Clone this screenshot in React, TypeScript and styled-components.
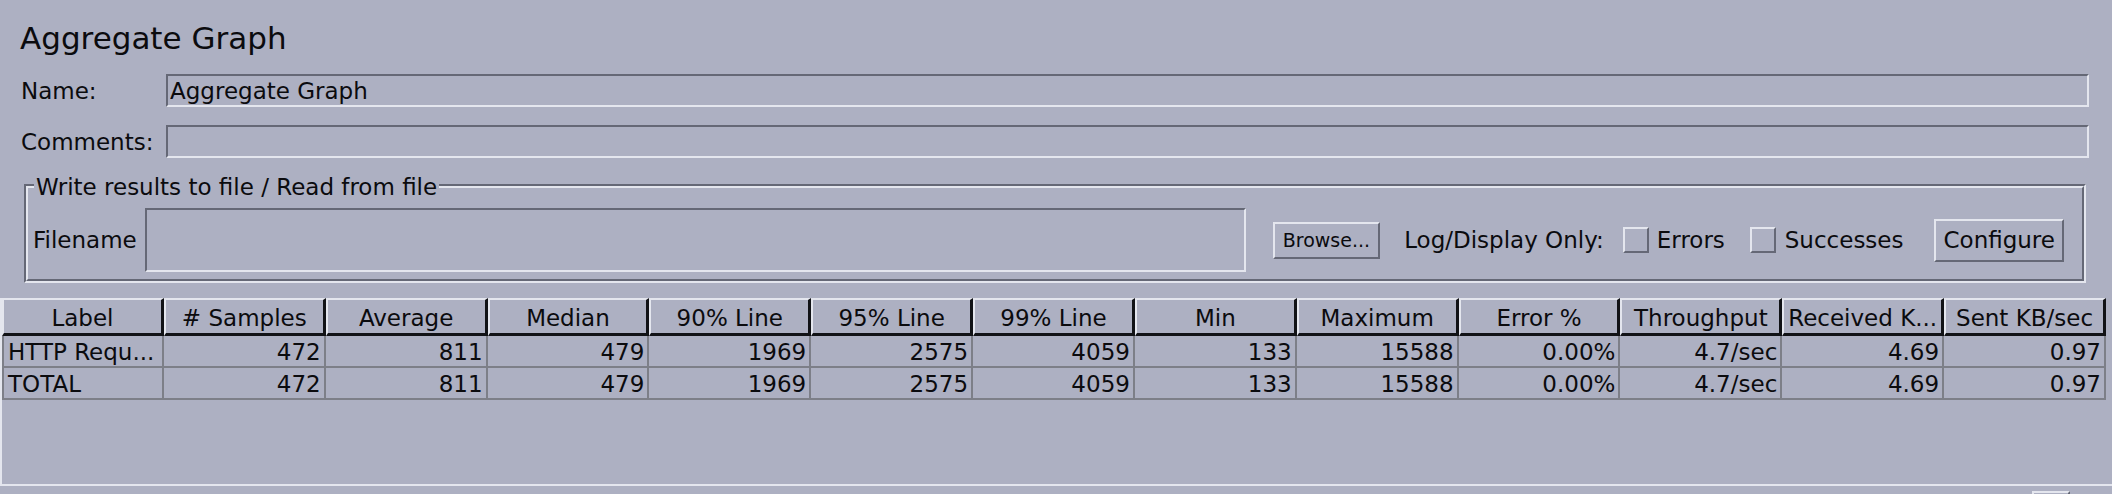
import React from "react";
import styled, { createGlobalStyle } from "styled-components";

const BG = "#adb0c2";
const DARK = "#656876";
const LIGHT = "#e4e6ee";
const INK = "#0b0b0e";
const GRID = "#7d7f88";
const FONT = `"DejaVu Sans", "Liberation Sans", sans-serif`;

const Global = createGlobalStyle`
  html, body { margin: 0; padding: 0; background: ${BG}; }
  body {
    width: 2112px; height: 494px; overflow: hidden;
    font-family: ${FONT}; color: ${INK};
  }
  * { box-sizing: border-box; }
`;

const Page = styled.div`
  display: flex;
  flex-direction: column;
  width: 2112px;
  height: 494px;
  overflow: hidden;
  & > * { flex-shrink: 0; }
`;

const Top = styled.div`
  display: flex;
  flex-direction: column;
  padding: 0 23px 0 20px;
`;

const Title = styled.h1`
  margin: 20px 0 0;
  font-size: 31px;
  line-height: 36px;
  font-weight: normal;
`;

const FormRow = styled.div<{ $mt: number }>`
  display: flex;
  align-items: center;
  margin-top: ${(p) => p.$mt}px;
`;

const RowLabel = styled.label`
  width: 146px;
  padding-left: 1px;
  font-size: 23px;
  line-height: 28px;
`;

const TextField = styled.input<{ $h: number }>`
  flex: 1;
  min-width: 0;
  height: ${(p) => p.$h}px;
  margin: 0;
  padding: 0 2px;
  font: 23px ${FONT};
  color: ${INK};
  background: transparent;
  border-style: solid;
  border-width: 2px;
  border-color: ${DARK} ${LIGHT} ${LIGHT} ${DARK};
  outline: none;
`;

const Group = styled.div`
  position: relative;
  margin: 26px 26px 0 24px;
  border: 2px solid;
  border-color: ${DARK} ${LIGHT} ${LIGHT} ${DARK};
`;

const GroupInner = styled.div`
  display: flex;
  align-items: center;
  padding: 20px 18px 7px 3px;
  border: 2px solid;
  border-color: ${LIGHT} ${DARK} ${DARK} ${LIGHT};
`;

const Legend = styled.span`
  position: absolute;
  top: -11px;
  left: 8px;
  padding: 0 2px;
  background: ${BG};
  font-size: 23px;
  line-height: 24px;
`;

const FileLabel = styled.label`
  width: 114px;
  padding-left: 2px;
  font-size: 23px;
  line-height: 28px;
`;

const FileField = styled(TextField)`
  flex: 0 0 1101px;
`;

const Button = styled.button<{ $ml: number; $w: number; $h: number; $fs: number }>`
  margin: 0 0 0 ${(p) => p.$ml}px;
  width: ${(p) => p.$w}px;
  height: ${(p) => p.$h}px;
  padding: 0;
  font: ${(p) => p.$fs}px ${FONT};
  color: ${INK};
  background: ${BG};
  border-style: solid;
  border-width: 2px;
  border-color: ${LIGHT} ${DARK} ${DARK} ${LIGHT};
`;

const Text = styled.span<{ $ml: number }>`
  margin-left: ${(p) => p.$ml}px;
  font-size: 23px;
  line-height: 28px;
  white-space: nowrap;
`;

const Check = styled.input.attrs({ type: "checkbox" })<{ $ml: number }>`
  appearance: none;
  -webkit-appearance: none;
  margin: 0 0 0 ${(p) => p.$ml}px;
  width: 26px;
  height: 26px;
  background: ${BG};
  border-style: solid;
  border-width: 2px;
  border-color: ${LIGHT} ${DARK} ${DARK} ${LIGHT};
`;

const ScrollPane = styled.div`
  margin-top: 15px;
  height: 188px;
  border-left: 2px solid ${LIGHT};
  border-bottom: 2px solid ${LIGHT};
`;

const Table = styled.table`
  width: 2104px;
  table-layout: fixed;
  border-collapse: separate;
  border-spacing: 0;
  font-size: 23px;
`;

const Th = styled.th`
  height: 38px;
  padding: 2px 2px 0;
  font-weight: normal;
  text-align: center;
  white-space: nowrap;
  overflow: hidden;
  border-style: solid;
  border-width: 2px 3px 3px 2px;
  border-color: ${LIGHT} #111216 #111216 ${LIGHT};
`;

const Td = styled.td<{ $left?: boolean }>`
  height: 32px;
  padding: 1px 3px 0 4px;
  text-align: ${(p) => (p.$left ? "left" : "right")};
  white-space: nowrap;
  overflow: hidden;
  border-right: 2px solid ${GRID};
  border-bottom: 2px solid ${GRID};
  border-left: ${(p) => (p.$left ? `2px solid ${GRID}` : "none")};
`;

const Footer = styled.div`
  display: flex;
  justify-content: flex-end;
  padding: 5px 42px 0 0;
  height: 20px;
`;

const Stub = styled.div`
  width: 38px;
  height: 12px;
  border-style: solid;
  border-width: 2px 2px 0 2px;
  border-color: ${LIGHT} ${DARK} ${DARK} ${LIGHT};
`;

const headers = [
  "Label",
  "# Samples",
  "Average",
  "Median",
  "90% Line",
  "95% Line",
  "99% Line",
  "Min",
  "Maximum",
  "Error %",
  "Throughput",
  "Received K...",
  "Sent KB/sec",
];

const rows = [
  ["HTTP Requ...", "472", "811", "479", "1969", "2575", "4059", "133", "15588", "0.00%", "4.7/sec", "4.69", "0.97"],
  ["TOTAL", "472", "811", "479", "1969", "2575", "4059", "133", "15588", "0.00%", "4.7/sec", "4.69", "0.97"],
];

export default function App() {
  return (
    <>
      <Global />
      <Page>
        <Top>
          <Title>Aggregate Graph</Title>
          <FormRow $mt={18}>
            <RowLabel>Name:</RowLabel>
            <TextField $h={33} readOnly value="Aggregate Graph" />
          </FormRow>
          <FormRow $mt={18}>
            <RowLabel>Comments:</RowLabel>
            <TextField $h={33} readOnly value="" />
          </FormRow>
        </Top>
        <Group>
          <Legend>Write results to file / Read from file</Legend>
          <GroupInner>
            <FileLabel>Filename</FileLabel>
            <FileField $h={64} readOnly value="" />
            <Button $ml={27} $w={108} $h={37} $fs={19}>
              Browse...
            </Button>
            <Text $ml={24}>Log/Display Only:</Text>
            <Check $ml={19} />
            <Text $ml={8}>Errors</Text>
            <Check $ml={25} />
            <Text $ml={9}>Successes</Text>
            <Button $ml={31} $w={130} $h={43} $fs={23}>
              Configure
            </Button>
          </GroupInner>
        </Group>
        <ScrollPane>
          <Table>
            <thead>
              <tr>
                {headers.map((h) => (
                  <Th key={h}>{h}</Th>
                ))}
              </tr>
            </thead>
            <tbody>
              {rows.map((r, i) => (
                <tr key={i}>
                  {r.map((c, j) => (
                    <Td key={j} $left={j === 0}>
                      {c}
                    </Td>
                  ))}
                </tr>
              ))}
            </tbody>
          </Table>
        </ScrollPane>
        <Footer>
          <Stub />
        </Footer>
      </Page>
    </>
  );
}
